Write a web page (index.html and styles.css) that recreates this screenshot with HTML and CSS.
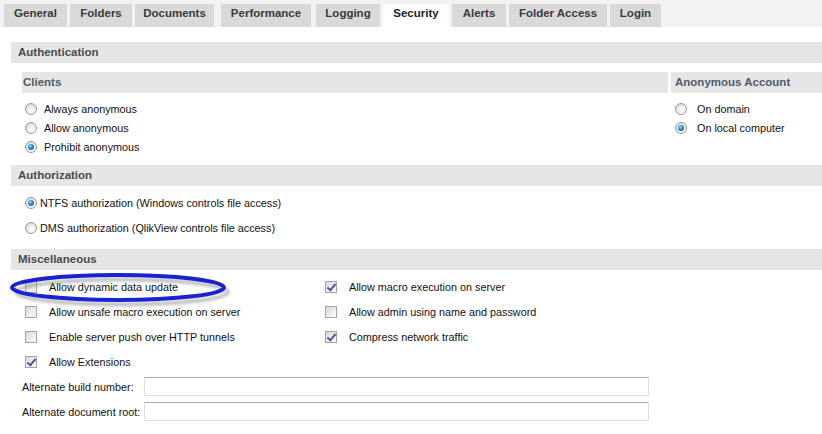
FILE: index.html
```html
<!DOCTYPE html>
<html>
<head>
<meta charset="utf-8">
<link rel="stylesheet" href="styles.css">
</head>
<body>
<div class="tabs">
  <div class="tab t-general">General</div>
  <div class="tab t-folders">Folders</div>
  <div class="tab t-documents">Documents</div>
  <div class="tab t-performance">Performance</div>
  <div class="tab t-logging">Logging</div>
  <div class="tab active t-security">Security</div>
  <div class="tab t-alerts">Alerts</div>
  <div class="tab t-access">Folder Access</div>
  <div class="tab t-login">Login</div>
</div>
<div class="content">
  <div class="section-head">Authentication</div>
  <div class="auth-body">
    <div class="clients">
      <div class="sub-head">Clients</div>
      <div class="radio-list">
        <div class="radio-row"><span class="radio"></span><span>Always anonymous</span></div>
        <div class="radio-row"><span class="radio"></span><span>Allow anonymous</span></div>
        <div class="radio-row"><span class="radio on"></span><span>Prohibit anonymous</span></div>
      </div>
    </div>
    <div class="anon">
      <div class="sub-head">Anonymous Account</div>
      <div class="radio-list anon-list">
        <div class="radio-row"><span class="radio"></span><span>On domain</span></div>
        <div class="radio-row"><span class="radio on"></span><span>On local computer</span></div>
      </div>
    </div>
  </div>
  <div class="section-head">Authorization</div>
  <div class="authz-list">
    <div class="radio-row"><span class="radio on"></span><span>NTFS authorization (Windows controls file access)</span></div>
    <div class="radio-row"><span class="radio"></span><span>DMS authorization (QlikView controls file access)</span></div>
  </div>
  <div class="section-head">Miscellaneous</div>
  <div class="misc">
    <div class="check-grid">
      <div class="check-row"><span class="check"></span><span>Allow dynamic data update</span></div>
      <div class="check-row"><span class="check on"></span><span>Allow macro execution on server</span></div>
      <div class="check-row"><span class="check"></span><span>Allow unsafe macro execution on server</span></div>
      <div class="check-row"><span class="check"></span><span>Allow admin using name and password</span></div>
      <div class="check-row"><span class="check"></span><span>Enable server push over HTTP tunnels</span></div>
      <div class="check-row"><span class="check on"></span><span>Compress network traffic</span></div>
      <div class="check-row"><span class="check on"></span><span>Allow Extensions</span></div>
    </div>
    <div class="field-row"><label>Alternate build number:</label><span class="input"></span></div>
    <div class="field-row"><label>Alternate document root:</label><span class="input"></span></div>
  </div>
</div>
<svg class="highlight" width="240" height="40" viewBox="0 0 240 40">
  <defs>
    <filter id="sh" x="-10%" y="-50%" width="120%" height="200%">
      <feGaussianBlur stdDeviation="1.5"/>
    </filter>
  </defs>
  <ellipse cx="117" cy="19.5" rx="106" ry="12.5" fill="none" stroke="#8a8a8a" stroke-width="3.5" opacity="0.6" filter="url(#sh)" transform="translate(2,2.5)"/>
  <ellipse cx="115" cy="17.5" rx="106" ry="12.5" fill="none" stroke="#1c22d4" stroke-width="4"/>
</svg>
</body>
</html>
```

FILE: styles.css
```css
html, body {
  margin: 0;
  padding: 0;
  background: #fff;
}
body {
  width: 822px;
  height: 434px;
  overflow: hidden;
  position: relative;
  font-family: "Liberation Sans", Arial, sans-serif;
  font-size: 10.8px;
  color: #111;
}
.tabs {
  display: flex;
  align-items: flex-end;
  gap: 3px;
  height: 27px;
  padding-left: 4px;
  background: #f2f2f2;
}
.tab {
  height: 23px;
  line-height: 19px;
  background: #d9d9d9;
  color: #3a3a3a;
  font-weight: bold;
  font-size: 11.5px;
  text-align: center;
  box-sizing: border-box;
}
.tab.active { background: #fff; color: #222; }
.t-general { width: 63px; }
.t-folders { width: 62px; }
.t-documents { width: 79px; }
.t-performance { width: 90px; margin-left: 4px; }
.t-logging { width: 64px; margin-left: 2px; }
.t-security { width: 66px; }
.t-alerts { width: 54px; }
.t-access { width: 98px; }
.t-login { width: 51px; }

.content {
  padding: 15px 0 0 11px;
}
.section-head {
  height: 21px;
  line-height: 21px;
  background: #e6e6e6;
  padding-left: 7px;
  font-weight: bold;
  font-size: 11.5px;
  color: #4a4a4a;
}
.auth-body {
  display: flex;
  gap: 3px;
  padding: 9px 0 8px 11px;
}
.clients { flex: 1; }
.anon { width: 151px; }
.sub-head {
  height: 21px;
  line-height: 21px;
  background: #e6e6e6;
  padding-left: 1px;
  font-weight: bold;
  font-size: 11.5px;
  color: #505a66;
}
.anon .sub-head { padding-left: 4px; }
.radio-list {
  padding: 6px 0 1px 3px;
}
.anon-list { padding-left: 4px; }
.radio-row {
  display: flex;
  align-items: center;
  height: 19px;
  white-space: nowrap;
}
.radio {
  width: 12px;
  height: 12px;
  border-radius: 50%;
  box-sizing: border-box;
  border: 1px solid #9a9a9a;
  background: radial-gradient(circle at 60% 65%, #ffffff 0, #f1f1f1 40%, #c9c9c9 100%);
  margin-right: 7px;
  flex: none;
  position: relative;
}
.anon-list .radio { margin-right: 10px; }
.radio.on::after {
  content: "";
  position: absolute;
  left: 2px;
  top: 2px;
  width: 6px;
  height: 6px;
  border-radius: 50%;
  background: radial-gradient(circle at 40% 35%, #9fe0ff 0, #2c8fd6 40%, #0a3c78 100%);
}
.authz-list {
  padding: 4px 0 9px 14px;
}
.authz-list .radio-row { height: 25px; }
.authz-list .radio { margin-right: 3px; }
.misc {
  padding: 4px 0 0 0;
}
.check-grid {
  display: grid;
  grid-template-columns: 300px 300px;
  padding-left: 14px;
}
.check-row {
  display: flex;
  align-items: center;
  height: 25px;
  white-space: nowrap;
  padding-top: 1px;
  box-sizing: border-box;
}
.check {
  width: 12px;
  height: 12px;
  box-sizing: border-box;
  border: 1px solid #a3a3a3;
  background: linear-gradient(135deg, #d8d8d8 0%, #ececec 50%, #fbfbfb 100%);
  margin-right: 12px;
  flex: none;
  position: relative;
}
.check.on::after {
  content: "";
  position: absolute;
  left: 3px;
  top: 0px;
  width: 3px;
  height: 7px;
  border: solid #4b5a9a;
  border-width: 0 2px 2px 0;
  transform: rotate(40deg);
}
.field-row {
  display: flex;
  align-items: center;
  height: 25px;
  padding-left: 11px;
  white-space: nowrap;
}
.field-row label {
  width: 122px;
  flex: none;
}
.input {
  width: 505px;
  height: 19px;
  box-sizing: border-box;
  border: 1px solid #dedede;
  border-top-color: #ababab;
  background: #fff;
}
.highlight {
  position: absolute;
  left: 3px;
  top: 270px;
}
```
